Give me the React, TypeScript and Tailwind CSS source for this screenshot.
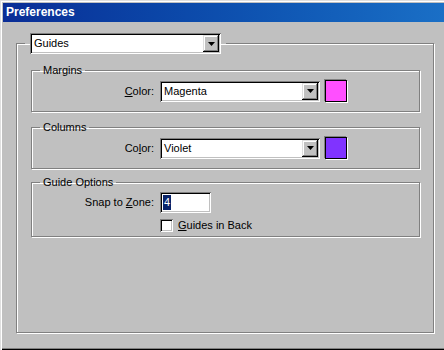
import type { ReactNode } from "react";

const sunken =
  "shadow-[inset_1px_1px_0_#808080,inset_-1px_-1px_0_#fff,inset_2px_2px_0_#000,inset_-2px_-2px_0_#c0c0c0]";
const raised =
  "shadow-[inset_-1px_-1px_0_#000,inset_1px_1px_0_#dfdfdf,inset_-2px_-2px_0_#808080,inset_2px_2px_0_#fff]";
const etched =
  "border border-[#808080] shadow-[inset_1px_1px_0_#fff,1px_1px_0_#fff]";

function Combo({ value, width }: { value: string; width: string }) {
  return (
    <div className={`flex h-[21px] bg-white p-[2px] ${width} ${sunken}`}>
      <span className="flex-1 pl-[2px] leading-[17px]">{value}</span>
      <span className={`flex h-[17px] w-[16px] items-center justify-center bg-[#c0c0c0] ${raised}`}>
        <svg width="7" height="4" viewBox="0 0 7 4">
          <polygon points="0,0 7,0 3.5,4" fill="#000" />
        </svg>
      </span>
    </div>
  );
}

function Group({ title, className, children }: { title: string; className: string; children: ReactNode }) {
  return (
    <fieldset className={`${etched} min-w-0 px-0 ${className}`}>
      <legend className="ml-[8px] px-[3px] leading-[13px]">{title}</legend>
      {children}
    </fieldset>
  );
}

function Row({ label, children }: { label: ReactNode; children: ReactNode }) {
  return (
    <div className="flex items-center gap-[6px]">
      <span className="w-[122px] text-right">{label}</span>
      {children}
    </div>
  );
}

function ColorRow({ label, value, swatch }: { label: ReactNode; value: string; swatch: string }) {
  return (
    <Row label={label}>
      <Combo value={value} width="w-[160px]" />
      <span className={`ml-[-1px] h-[22px] w-[22px] border border-black shadow-[-1px_-1px_0_#808080,1px_1px_0_#fff] ${swatch}`} />
    </Row>
  );
}

export default function App() {
  return (
    <div
      className="h-[350px] w-[444px] overflow-hidden bg-[#c0c0c0] pl-[3px] pt-[3px] text-[11px] text-black shadow-[inset_1px_1px_0_#dfdfdf,inset_2px_2px_0_#fff,inset_0_-1px_0_#000,inset_0_-2px_0_#808080]"
      style={{ fontFamily: '"Liberation Sans", Arial, sans-serif' }}
    >
      <div className="h-[19px] bg-linear-to-r from-[#0a2d96] to-[#1a6fc6] pl-[3px] text-[12px] font-bold leading-[19px] text-white">
        Preferences
      </div>

      <fieldset className={`${etched} ml-[13px] mt-[11px] h-[300px] w-[418px] min-w-0 px-0`}>
        <legend className="ml-[8px] px-[5px]">
          <Combo value="Guides" width="w-[191px]" />
        </legend>

        <div className="mt-[10px] pl-[14px] pr-[13px]">
          <Group title="Margins" className="pb-[9px]">
            <div className="mt-[3px]">
              <ColorRow
                label={<><u>C</u>olor:</>}
                value="Magenta"
                swatch="bg-[#ff4fff]"
              />
            </div>
          </Group>

          <Group title="Columns" className="mt-[9px] pb-[9px]">
            <div className="mt-[3px]">
              <ColorRow
                label={<>Co<u>l</u>or:</>}
                value="Violet"
                swatch="bg-[#8033ff]"
              />
            </div>
          </Group>

          <Group title="Guide Options" className="mt-[7px] pb-[4px]">
            <div className="mt-[3px]">
              <Row label={<>Snap to <u>Z</u>one:</>}>
                <div className={`h-[21px] w-[51px] bg-white pl-[3px] pt-[2px] ${sunken}`}>
                  <span className="inline-block bg-[#0a246a] px-[1px] leading-[15px] text-white">4</span>
                </div>
              </Row>
            </div>
            <div className="mt-[6px] flex items-center gap-[5px] pl-[128px]">
              <span className={`h-[13px] w-[13px] bg-white ${sunken}`} />
              <span className="leading-[13px]">
                <u>G</u>uides in Back
              </span>
            </div>
          </Group>
        </div>
      </fieldset>
    </div>
  );
}
